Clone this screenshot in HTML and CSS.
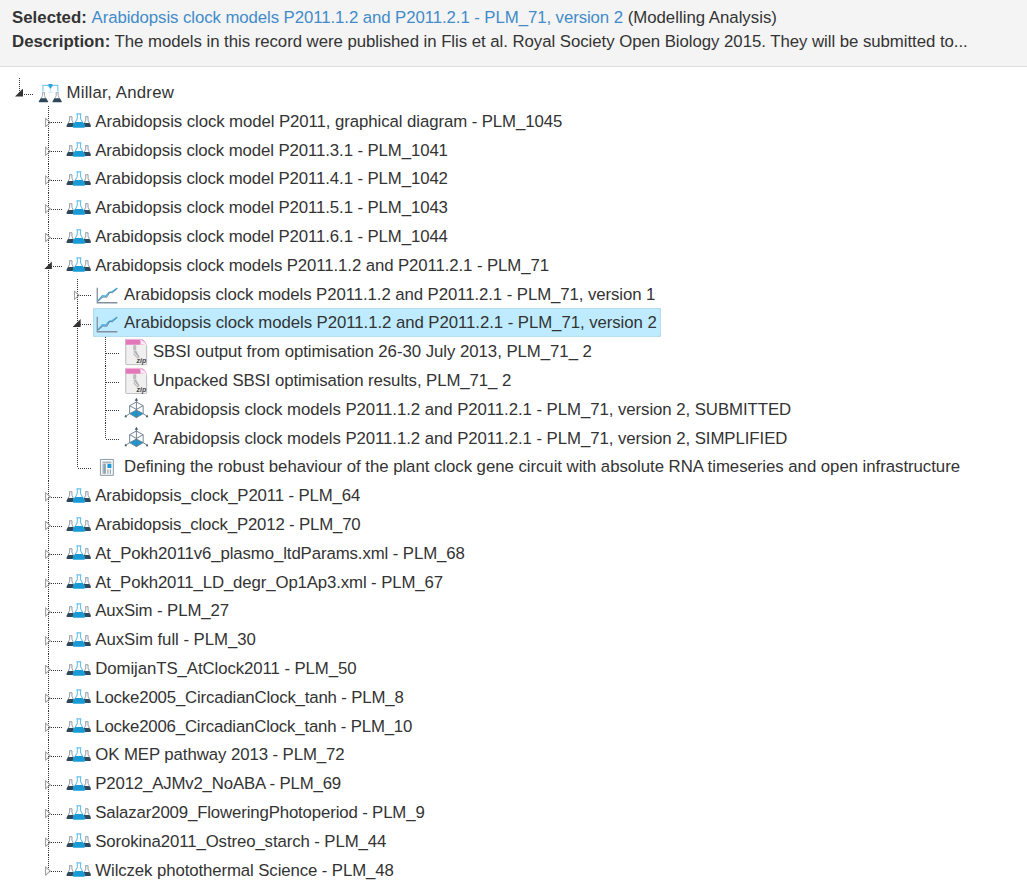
FILE: index.html
```html
<!DOCTYPE html>
<html lang="en">
<head>
<meta charset="utf-8">
<title>Experiment tree</title>
<link rel="stylesheet" href="styles.css">
</head>
<body>
<svg class="sprite" aria-hidden="true">
  <defs>
    <symbol id="root" viewBox="0 0 29 29">
      <path d="M7 13.500V7.500h15v6" fill="none" stroke="#7ccaf0" stroke-width="1.200"/>
      <path d="M12.500 14.200h4M14.500 9v4" fill="none" stroke="#b5dff3"/>
      <path d="M12.500 6h4v2.800h-1v1.500h-2V8.800h-1z" fill="#2ba4dd"/>
      <g id="small-flask"><path d="M6 14.800h3M6.500 15v3L3.800 23h7.400L8.500 18v-3" fill="#fff" stroke="#9aa4ab" stroke-width=".9"/><path d="M4.800 20.300h5.400l1.800 3q.2 1.200-.8 1.200H3.800q-1 0-.8-1.200z" fill="#30475a"/></g>
      <use href="#small-flask" x="13.800"/>
    </symbol>
    <symbol id="flasks" viewBox="0 0 29 29">
      <g id="side-flask"><path d="M4.200 10.800h3M4.700 11v3.300L2.500 19h6.800L7 14.300V11" fill="#fff" stroke="#84909a" stroke-width=".9"/><path d="M3.200 17h5l1.700 3q.3 1.200-.9 1.200H2.400q-1.200 0-.9-1.200z" fill="#30475a"/></g>
      <use href="#side-flask" x="16.200"/>
      <path d="M11.500 7.900h5M12.400 8v4.500L8.900 19h10.200l-3.500-6.500V8" fill="#fff" stroke="#67c0eb" stroke-width="1.100"/>
      <path d="M10.200 16h7.600l2.600 4.200q.4 1.600-1.300 1.600H8.900q-1.700 0-1.300-1.600z" fill="#179ad6"/>
    </symbol>
    <symbol id="chart" viewBox="0 -.7 29 29">
      <path d="M4.300 8v15.200H24.500" fill="none" stroke="#81909c" stroke-width="1.300"/>
      <path d="M5 21.500l4.500-5.300 3.500.4 3-3.500 3.500-1L24.500 8.500" fill="none" stroke="#45b2e5" stroke-width="1.500"/>
      <path d="M5 21.500l5-4 4 .2 3-5.200 2.500.8L24 9" fill="none" stroke="#6b7b87" stroke-width=".8"/>
    </symbol>
    <symbol id="zip" viewBox="-.3 -.4 29 29">
      <path d="M3.500 2h15l6 6v18.500q0 1-1 1h-19q-1 0-1-1z" fill="#f0f0f0" stroke="#b7b7b7"/>
      <path d="M3.500 1.500h15q4 .5 6 6h-21z" fill="#e277b9"/><path d="M3.500 1.500h15l2 1.200h-17z" fill="#f2b2d9"/>
      <path d="M18 2q.8 3.500 0 5.500 4-1 6.500 1.500-.5-5-6.500-7z" fill="#f8e9f2"/>
      <path d="M11 8h3v5h-3z" fill="#bbb"/><path d="M11.500 13.500h2.500l3.500 6-2 2-4-4z" fill="#b5b5b5"/><path d="M11.500 15l4 5" stroke="#eee"/>
      <text x="14.300" y="25.600" class="zip-label">zip</text>
    </symbol>
    <symbol id="cube" viewBox="0 -1.200 29 29">
      <path d="M7.800 18.500l6.700-3.300 6.700 3.300-6.700 4z" fill="#1799d5"/>
      <path d="M14.500 6.900l6.800 3.700v8l-6.800 4-6.800-4v-8zM7.700 10.600l6.800 3.700 6.800-3.700M14.500 14.300v8.300M14.500 4v11L7.700 18.600M14.500 15l6.800 3.600M7.700 18.600l-4.700 3M21.300 18.600l4.700 3" fill="none" stroke="#647786" stroke-width=".9"/>
      <path d="M14.500 2.700l1.700 2.800h-3.400zM2.500 22.300l1-2.700 1.700 2.600zM26.500 22.300l-1-2.700-1.700 2.600z" fill="#40586b"/>
    </symbol>
    <symbol id="paper" viewBox="0 0 29 29">
      <path d="M7.500 7.500h13v16h-13z" fill="#f7f9fa" stroke="#8b9aa6"/><path d="M9.500 9.500h9v2h-9zM9.500 12h3.500v10H9.500z" fill="#a7b4bd"/><path d="M12 12v10M15 17.500v4.500M17.500 17.500v4.500" stroke="#8496a2"/><path d="M14.500 12h4v4h-4z" fill="#159ad7"/>
    </symbol>
  </defs>
</svg>

<header class="summary">
  <div><strong>Selected:</strong> <a class="link">Arabidopsis clock models P2011.1.2 and P2011.2.1 - PLM_71, version 2</a> (Modelling Analysis)</div>
  <div class="t4"><strong>Description:</strong> The models in this record were published in Flis et al. Royal Society Open Biology 2015. They will be submitted to...</div>
</header>

<ul class="tree">
  <li class="node last open"><div class="row"><i class="toggle"></i><a class="item wide"><svg class="icon"><use href="#root"/></svg>Millar, Andrew</a></div>
    <ul class="branch">
      <li class="node closed"><div class="row"><i class="toggle"></i><a class="item t8"><svg class="icon"><use href="#flasks"/></svg>Arabidopsis clock model P2011, graphical diagram - PLM_1045</a></div></li>
      <li class="node closed"><div class="row"><i class="toggle"></i><a class="item t10"><svg class="icon"><use href="#flasks"/></svg>Arabidopsis clock model P2011.3.1 - PLM_1041</a></div></li>
      <li class="node closed"><div class="row"><i class="toggle"></i><a class="item t10"><svg class="icon"><use href="#flasks"/></svg>Arabidopsis clock model P2011.4.1 - PLM_1042</a></div></li>
      <li class="node closed"><div class="row"><i class="toggle"></i><a class="item t10"><svg class="icon"><use href="#flasks"/></svg>Arabidopsis clock model P2011.5.1 - PLM_1043</a></div></li>
      <li class="node closed"><div class="row"><i class="toggle"></i><a class="item t10"><svg class="icon"><use href="#flasks"/></svg>Arabidopsis clock model P2011.6.1 - PLM_1044</a></div></li>
      <li class="node open"><div class="row"><i class="toggle"></i><a class="item t10"><svg class="icon"><use href="#flasks"/></svg>Arabidopsis clock models P2011.1.2 and P2011.2.1 - PLM_71</a></div>
        <ul class="branch">
          <li class="node closed"><div class="row"><i class="toggle"></i><a class="item t8"><svg class="icon"><use href="#chart"/></svg>Arabidopsis clock models P2011.1.2 and P2011.2.1 - PLM_71, version 1</a></div></li>
          <li class="node open"><div class="row"><i class="toggle"></i><a class="item t6 selected"><svg class="icon"><use href="#chart"/></svg>Arabidopsis clock models P2011.1.2 and P2011.2.1 - PLM_71, version 2</a></div>
            <ul class="branch">
              <li class="node leaf"><div class="row"><i class="toggle"></i><a class="item t4"><svg class="icon"><use href="#zip"/></svg>SBSI output from optimisation 26-30 July 2013, PLM_71_ 2</a></div></li>
              <li class="node leaf"><div class="row"><i class="toggle"></i><a class="item t8"><svg class="icon"><use href="#zip"/></svg>Unpacked SBSI optimisation results, PLM_71_ 2</a></div></li>
              <li class="node leaf"><div class="row"><i class="toggle"></i><a class="item t6"><svg class="icon"><use href="#cube"/></svg>Arabidopsis clock models P2011.1.2 and P2011.2.1 - PLM_71, version 2, SUBMITTED</a></div></li>
              <li class="node leaf last"><div class="row"><i class="toggle"></i><a class="item t6"><svg class="icon"><use href="#cube"/></svg>Arabidopsis clock models P2011.1.2 and P2011.2.1 - PLM_71, version 2, SIMPLIFIED</a></div></li>
            </ul>
          </li>
          <li class="node leaf last"><div class="row"><i class="toggle"></i><a class="item t4"><svg class="icon"><use href="#paper"/></svg>Defining the robust behaviour of the plant clock gene circuit with absolute RNA timeseries and open infrastructure</a></div></li>
        </ul>
      </li>
      <li class="node closed"><div class="row"><i class="toggle"></i><a class="item t14"><svg class="icon"><use href="#flasks"/></svg>Arabidopsis_clock_P2011 - PLM_64</a></div></li>
      <li class="node closed"><div class="row"><i class="toggle"></i><a class="item t16"><svg class="icon"><use href="#flasks"/></svg>Arabidopsis_clock_P2012 - PLM_70</a></div></li>
      <li class="node closed"><div class="row"><i class="toggle"></i><a class="item t10"><svg class="icon"><use href="#flasks"/></svg>At_Pokh2011v6_plasmo_ltdParams.xml - PLM_68</a></div></li>
      <li class="node closed"><div class="row"><i class="toggle"></i><a class="item t12"><svg class="icon"><use href="#flasks"/></svg>At_Pokh2011_LD_degr_Op1Ap3.xml - PLM_67</a></div></li>
      <li class="node closed"><div class="row"><i class="toggle"></i><a class="item t10"><svg class="icon"><use href="#flasks"/></svg>AuxSim - PLM_27</a></div></li>
      <li class="node closed"><div class="row"><i class="toggle"></i><a class="item t4"><svg class="icon"><use href="#flasks"/></svg>AuxSim full - PLM_30</a></div></li>
      <li class="node closed"><div class="row"><i class="toggle"></i><a class="item t8"><svg class="icon"><use href="#flasks"/></svg>DomijanTS_AtClock2011 - PLM_50</a></div></li>
      <li class="node closed"><div class="row"><i class="toggle"></i><a class="item t16"><svg class="icon"><use href="#flasks"/></svg>Locke2005_CircadianClock_tanh - PLM_8</a></div></li>
      <li class="node closed"><div class="row"><i class="toggle"></i><a class="item t18"><svg class="icon"><use href="#flasks"/></svg>Locke2006_CircadianClock_tanh - PLM_10</a></div></li>
      <li class="node closed"><div class="row"><i class="toggle"></i><a class="item t8"><svg class="icon"><use href="#flasks"/></svg>OK MEP pathway 2013 - PLM_72</a></div></li>
      <li class="node closed"><div class="row"><i class="toggle"></i><a class="item t16"><svg class="icon"><use href="#flasks"/></svg>P2012_AJMv2_NoABA - PLM_69</a></div></li>
      <li class="node closed"><div class="row"><i class="toggle"></i><a class="item t14"><svg class="icon"><use href="#flasks"/></svg>Salazar2009_FloweringPhotoperiod - PLM_9</a></div></li>
      <li class="node closed"><div class="row"><i class="toggle"></i><a class="item t10"><svg class="icon"><use href="#flasks"/></svg>Sorokina2011_Ostreo_starch - PLM_44</a></div></li>
      <li class="node closed last"><div class="row"><i class="toggle"></i><a class="item t10"><svg class="icon"><use href="#flasks"/></svg>Wilczek photothermal Science - PLM_48</a></div></li>
    </ul>
  </li>
</ul>
</body>
</html>
```
FILE: styles.css
```css
* { box-sizing: border-box; }
body {
  margin: 0;
  height: 888px;
  overflow: hidden;
  background: #fff;
  color: #333;
  font: 16.8px/24px "Liberation Sans", Arial, sans-serif;
}
.sprite { display: block; width: 0; height: 0; }
.zip-label { font: bold italic 7px "Liberation Sans", Arial, sans-serif; fill: #444; letter-spacing: 0; }
.summary {
  height: 67px;
  padding: 6px 12px 0;
  background: #f4f4f4;
  border-bottom: 1px solid #ddd;
  white-space: nowrap;
}
.summary strong { letter-spacing: .03px; }
.link { color: #428bca; letter-spacing: -.078px; }

/* Fine tracking steps, in hundredths of a pixel */
.t4 { letter-spacing: -.04px; }
.t6 { letter-spacing: -.06px; }
.t8 { letter-spacing: -.08px; }
.t10 { letter-spacing: -.1px; }
.t12 { letter-spacing: -.12px; }
.t14 { letter-spacing: -.14px; }
.t16 { letter-spacing: -.165px; }
.t18 { letter-spacing: -.18px; }
.wide { letter-spacing: .22px; }

.tree, .branch { margin: 0; padding: 0; list-style: none; }
.tree { padding: 10.600px 0 0 7px; }
.branch { padding-left: 28.800px; }
.node {
  background: repeating-linear-gradient(#333 0 1px, transparent 1px 2px) 12px 0 / 1px 100% no-repeat;
}
.node.last { background: none; }
.row { display: flex; height: 28.800px; white-space: nowrap; }

/* Connector: a vertical stub down to the row centre and a dotted run to the icon */
.toggle {
  flex: none;
  width: 28.800px;
  background:
    repeating-linear-gradient(#333 0 1px, transparent 1px 2px) 12px 0 / 1px 16px no-repeat,
    repeating-linear-gradient(90deg, #333 0 1px, transparent 1px 2px) 13px 16px / 14px 1px no-repeat;
}
.toggle::before { content: ""; display: block; }
.open > .row .toggle::before {
  width: 8px;
  height: 8px;
  margin: 11px 0 0 8px;
  background: #333;
  clip-path: polygon(100% 0, 100% 100%, 0 100%);
}
.closed > .row .toggle::before {
  width: 6px;
  height: 10px;
  margin: 11px 0 0 9.300px;
  background: #999;
  clip-path: polygon(evenodd, 0 0, 6px 5px, 0 10px, 0 0, 1px 2px, 1px 8px, 4.500px 5px, 1px 2px, 0 0);
}
.item {
  display: flex;
  height: 28.800px;
  margin: .5px 0 0 -.5px;
  padding-right: 4.500px;
  line-height: 29.200px;
  border-radius: 2px;
}
.selected { background: #beebff; box-shadow: inset 0 0 1.200px #888; }
.icon { flex: none; width: 28.800px; height: 28.800px; margin: -.5px 1.800px 0 .6px; }
```
